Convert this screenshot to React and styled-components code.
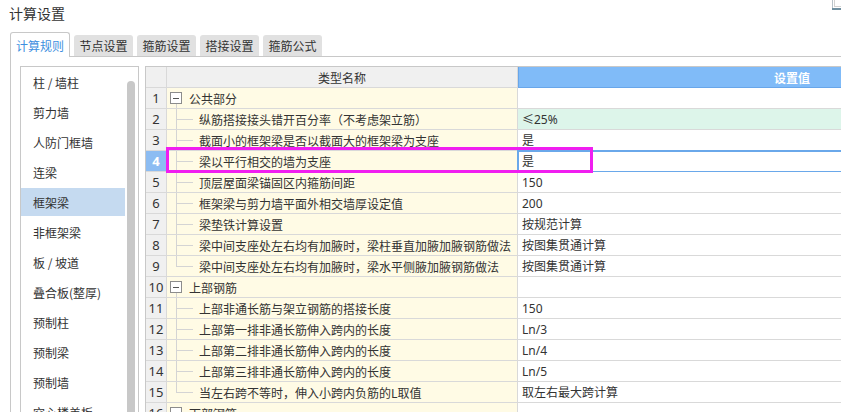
import React from 'react';
import styled, { createGlobalStyle } from 'styled-components';

const GlobalStyle = createGlobalStyle`
  html, body {
    margin: 0;
    padding: 0;
    background: #fff;
    overflow: hidden;
  }
  body {
    font-family: 'Noto Sans CJK SC', 'Noto Sans', sans-serif;
    color: #333;
  }
`;

const Page = styled.div`
  width: 841px;
  height: 412px;
  overflow: hidden;
  display: flex;
  flex-direction: column;
  background: #fff;
`;

const TitleBar = styled.div`
  height: 32px;
  display: flex;
  justify-content: space-between;
  align-items: flex-start;
  flex-shrink: 0;
`;

const TitleText = styled.div`
  margin: 3px 0 0 9px;
  font-size: 14px;
  line-height: 20px;
  color: #333;
`;

const TabStrip = styled.div`
  margin-left: 10px;
  height: 24px;
  display: flex;
  align-items: flex-end;
  gap: 4px;
  border-bottom: 1px solid #c8c8c8;
  flex-shrink: 0;
`;

const Tab = styled.div`
  box-sizing: border-box;
  display: flex;
  align-items: center;
  justify-content: center;
  font-size: 12px;
  border-radius: 3px 3px 0 0;
  width: ${p => (p.$active ? '60px' : '59px')};
  height: ${p => (p.$active ? '25px' : '21px')};
  margin-bottom: ${p => (p.$active ? '-1px' : '0')};
  background: ${p => (p.$active ? '#fff' : '#e1e1e1')};
  border: ${p => (p.$active ? '1px solid #c8c8c8' : 'none')};
  border-bottom: none;
  color: ${p => (p.$active ? '#3d8fe0' : '#333')};
  padding-top: ${p => (p.$active ? '1px' : '0')};
`;

const Panel = styled.div`
  flex: 1;
  min-height: 0;
  margin-left: 10px;
  border-left: 1px solid #c8c8c8;
  padding: 9px 0 0 9px;
  display: flex;
  align-items: flex-start;
  gap: 6px;
  overflow: hidden;
`;

const ListBox = styled.div`
  width: 119px;
  height: 400px;
  box-sizing: border-box;
  border: 1px solid #c8c8c8;
  display: flex;
  flex-shrink: 0;
  overflow: hidden;
`;

const ListItems = styled.div`
  width: 104px;
  display: flex;
  flex-direction: column;
`;

const ListItem = styled.div`
  height: 30px;
  box-sizing: border-box;
  flex-shrink: 0;
  display: flex;
  align-items: center;
  padding-left: 12px;
  font-size: 12px;
  color: #333;
  border-top: 1px solid transparent;
  border-bottom: 1px solid transparent;
  background: ${p => (p.$selected ? '#c5daf0' : 'transparent')};
  background-clip: padding-box;
`;

const ScrollTrack = styled.div`
  width: 13px;
  padding: 14px 0 0 2px;
  box-sizing: border-box;
`;

const ScrollThumb = styled.div`
  width: 8px;
  height: 400px;
  border-radius: 4px;
  background: #c8c8c8;
`;

const TableWrap = styled.div`
  position: relative;
  flex: 1;
  height: 400px;
  border-top: 1px solid #c8c8c8;
  border-left: 1px solid #c8c8c8;
  overflow: hidden;
`;

const Grid = styled.div`
  display: grid;
  grid-template-columns: 21px 351px 548px;
  grid-auto-rows: 21px;
`;

const Cell = styled.div`
  box-sizing: border-box;
  border-right: 1px solid #d9d9d9;
  border-bottom: 1px solid #d9d9d9;
  display: flex;
  align-items: center;
  font-size: 12px;
  color: #333;
  white-space: nowrap;
  overflow: hidden;
`;

const HeadCell = styled(Cell)`
  justify-content: center;
  background: ${p => (p.$blue ? '#80bbf8' : '#f0f0f0')};
  color: ${p => (p.$blue ? '#fff' : '#333')};
  font-weight: ${p => (p.$blue ? 700 : 400)};
  border-color: ${p => (p.$blue ? '#68a6ea' : '#d9d9d9')};
  border-left: ${p => (p.$blue ? '1px solid #68a6ea' : 'none')};
`;

const NumCell = styled(Cell)`
  justify-content: center;
  font-family: 'Noto Sans', sans-serif;
  font-size: 13px;
  background: ${p => (p.$active ? '#8cbcf2' : '#f0f0f0')};
  color: ${p => (p.$active ? '#fff' : '#333')};
  font-weight: ${p => (p.$active ? 700 : 400)};
`;

const NameCell = styled(Cell)`
  background: #fffbe5;
`;

const ValueCell = styled(Cell)`
  padding-left: 4px;
  font-family: 'Noto Sans', 'Noto Sans CJK SC', sans-serif;
  background: ${p => (p.$tint ? '#ddf5ea' : '#fff')};
  outline: ${p => (p.$selected ? '2px solid #6aa8ea' : 'none')};
  outline-offset: -1px;
`;

const Focus = styled.div`
  position: absolute;
  left: 20px;
  top: 80px;
  width: 427px;
  height: 26px;
  box-sizing: border-box;
  border: 3px solid #f01ef0;
  pointer-events: none;
`;

const Guide = ({ kind }) => {
  const c = '#d4d4d4';
  if (kind === 'group') {
    return (
      <svg width="22" height="20" shapeRendering="crispEdges" style={{ flexShrink: 0 }}>
        <line x1="9.5" y1="15" x2="9.5" y2="20" stroke={c} />
        <rect x="3.5" y="4.5" width="11" height="11" fill="#fff" stroke="#8c8c8c" />
        <line x1="6" y1="10.5" x2="12" y2="10.5" stroke="#555" />
      </svg>
    );
  }
  return (
    <svg width="32" height="20" shapeRendering="crispEdges" style={{ flexShrink: 0 }}>
      <line x1="9.5" y1="0" x2="9.5" y2={kind === 'last' ? 10.5 : 20} stroke={c} />
      <line x1="9.5" y1="10.5" x2="26" y2="10.5" stroke={c} />
    </svg>
  );
};

const CornerIcon = () => (
  <svg width="10" height="10" shapeRendering="crispEdges">
    <path d="M1.5 0V8.5" stroke="#b9c3ca" fill="none" />
    <rect x="3.5" y="-1" width="8" height="7" fill="none" stroke="#d2d2d2" />
    <rect x="1" y="8" width="9" height="2" fill="#6f8fa0" />
  </svg>
);

const tabs = ['计算规则', '节点设置', '箍筋设置', '搭接设置', '箍筋公式'];

const categories = [
  '柱 / 墙柱', '剪力墙', '人防门框墙', '连梁', '框架梁', '非框架梁',
  '板 / 坡道', '叠合板(整厚)', '预制柱', '预制梁', '预制墙', '空心楼盖板',
];

const rows = [
  { name: '公共部分', value: '', kind: 'group' },
  { name: '纵筋搭接接头错开百分率（不考虑架立筋）', value: '≤25%', kind: 'child', tint: true },
  { name: '截面小的框架梁是否以截面大的框架梁为支座', value: '是', kind: 'child' },
  { name: '梁以平行相交的墙为支座', value: '是', kind: 'child', selected: true },
  { name: '顶层屋面梁锚固区内箍筋间距', value: '150', kind: 'child' },
  { name: '框架梁与剪力墙平面外相交墙厚设定值', value: '200', kind: 'child' },
  { name: '梁垫铁计算设置', value: '按规范计算', kind: 'child' },
  { name: '梁中间支座处左右均有加腋时，梁柱垂直加腋加腋钢筋做法', value: '按图集贯通计算', kind: 'child' },
  { name: '梁中间支座处左右均有加腋时，梁水平侧腋加腋钢筋做法', value: '按图集贯通计算', kind: 'last' },
  { name: '上部钢筋', value: '', kind: 'group' },
  { name: '上部非通长筋与架立钢筋的搭接长度', value: '150', kind: 'child' },
  { name: '上部第一排非通长筋伸入跨内的长度', value: 'Ln/3', kind: 'child' },
  { name: '上部第二排非通长筋伸入跨内的长度', value: 'Ln/4', kind: 'child' },
  { name: '上部第三排非通长筋伸入跨内的长度', value: 'Ln/5', kind: 'child' },
  { name: '当左右跨不等时，伸入小跨内负筋的L取值', value: '取左右最大跨计算', kind: 'last' },
  { name: '下部钢筋', value: '', kind: 'group' },
];

export default function App() {
  return (
    <Page>
      <GlobalStyle />
      <TitleBar>
        <TitleText>计算设置</TitleText>
        <CornerIcon />
      </TitleBar>
      <TabStrip>
        {tabs.map((t, i) => (
          <Tab key={t} $active={i === 0}>{t}</Tab>
        ))}
      </TabStrip>
      <Panel>
        <ListBox>
          <ListItems>
            {categories.map((c, i) => (
              <ListItem key={c} $selected={i === 4}>{c}</ListItem>
            ))}
          </ListItems>
          <ScrollTrack>
            <ScrollThumb />
          </ScrollTrack>
        </ListBox>
        <TableWrap>
          <Grid>
            <HeadCell />
            <HeadCell>类型名称</HeadCell>
            <HeadCell $blue>设置值</HeadCell>
            {rows.map((r, i) => (
              <React.Fragment key={i}>
                <NumCell $active={r.selected}>{i + 1}</NumCell>
                <NameCell>
                  <Guide kind={r.kind} />
                  {r.name}
                </NameCell>
                <ValueCell $tint={r.tint} $selected={r.selected}>{r.value}</ValueCell>
              </React.Fragment>
            ))}
          </Grid>
          <Focus />
        </TableWrap>
      </Panel>
    </Page>
  );
}
